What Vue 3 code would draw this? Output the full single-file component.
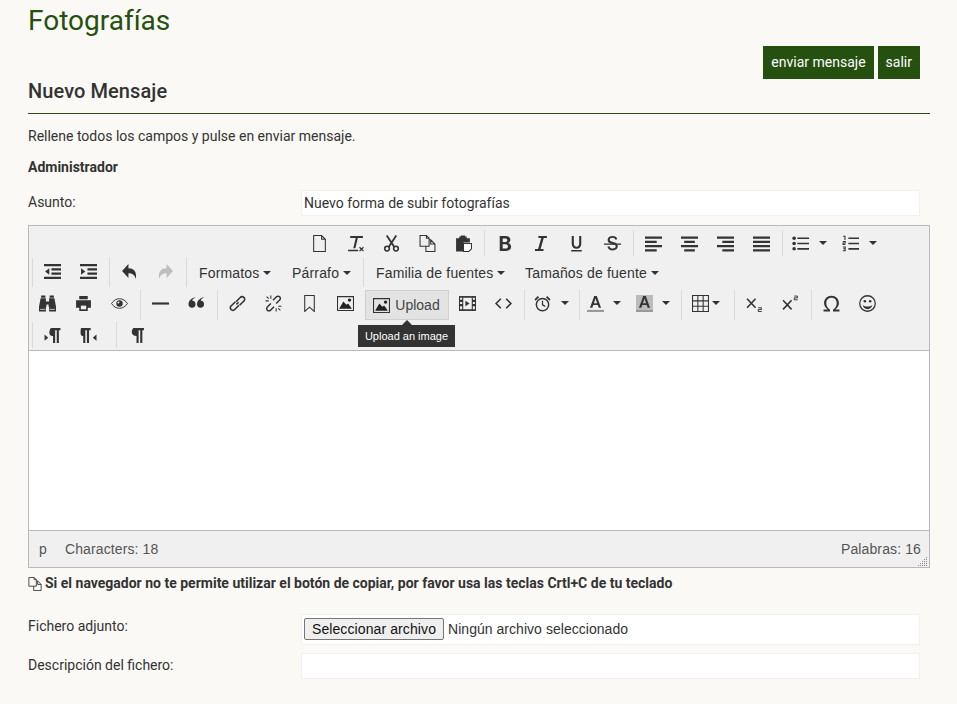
<script setup>
const icons = {
  newdoc: '<path d="M2.500 .5h7.500l3.500 3.500v11.500h-11z M10 .5v3.500h3.500" fill="none" stroke="#333"/>',
  clear: '<path d="M3 1h12v1.800h-4.800l-2.300 9.700h-2l2.300-9.700h-5.200zM1 13.800h9.500v1.400h-9.500z" fill="#333"/><path d="M11.800 11.500l3.700 3.700M15.500 11.500l-3.700 3.700" stroke="#333" stroke-width="1.200"/>',
  cut: '<path d="M3.500 .5l7 10.500M12.500 .5l-7 10.500" fill="none" stroke="#333" stroke-width="1.700"/><circle cx="3.800" cy="12.800" r="2.200" fill="none" stroke="#333" stroke-width="1.500"/><circle cx="12.200" cy="12.800" r="2.200" fill="none" stroke="#333" stroke-width="1.500"/>',
  copy: '<path d="M1 .5h6l2.500 2.500v7.500h-8.500zM7 .5v2.500h2.500M9.500 4.500h1.500l4 4v7h-8.500v-5M11 4.500v4h4" fill="none" stroke="#333"/>',
  paste: '<path d="M1 3h3v-1.500h1.500v-1h4v1h1.500v1.500h3v4h-6v8.500h-7z" fill="#333"/><path d="M8 8h7.500v5l-2.500 2.500h-5z" fill="#fff" stroke="#333"/>',
  bold: '<path d="M3.500 1h5.500c3 0 4.500 1.400 4.500 3.500 0 1.500-.8 2.600-2.100 3.100 1.700.4 2.800 1.700 2.800 3.500 0 2.600-1.900 3.900-5 3.900h-5.700zM6.300 3.200v3.400h2.300c1.300 0 2-.6 2-1.700s-.7-1.700-2-1.700zM6.300 8.700v4.100h2.600c1.500 0 2.300-.7 2.300-2s-.8-2.100-2.400-2.100z" fill="#333" fill-rule="evenodd"/>',
  italic: '<path d="M6 1h8v1.800h-2.900l-3 10.400h2.700v1.800h-8v-1.800h2.900l3-10.400h-2.700z" fill="#333"/>',
  under: '<path d="M3.500 1h2v7c0 1.800.9 3 2.500 3s2.500-1.200 2.500-3v-7h2v7c0 3.200-1.800 5-4.500 5s-4.500-1.800-4.500-5zM3 14h10v1.500h-10z" fill="#333"/>',
  strike: '<path d="M8 1c2.500 0 4 1 4.500 3l-1.800.5c-.3-1.100-1.200-1.800-2.700-1.800-1.600 0-2.600.7-2.600 1.800 0 1.100 1 1.500 3 2 2.900.7 4.600 1.600 4.600 4.100 0 2.500-2 3.900-4.800 3.900-2.700 0-4.500-1.200-5-3.500l1.900-.5c.3 1.500 1.400 2.300 3.100 2.300 1.600 0 2.800-.7 2.800-2.100 0-1.300-1.100-1.700-3.100-2.200-2.500-.6-4.500-1.400-4.500-3.900 0-2.100 1.900-3.600 4.600-3.600z" fill="#333"/><path d="M0 8h16v1.200h-16z" fill="#333"/>',
  aleft: '<path d="M0 1.500h16v2h-16zM0 5.500h11v2h-11zM0 9.500h16v2h-16zM0 13.500h11v2h-11z" fill="#333"/>',
  acenter: '<path d="M0 1.500h16v2h-16zM3 5.500h10v2h-10zM0 9.500h16v2h-16zM3 13.500h10v2h-10z" fill="#333"/>',
  aright: '<path d="M0 1.500h16v2h-16zM5 5.500h11v2h-11zM0 9.500h16v2h-16zM5 13.500h11v2h-11z" fill="#333"/>',
  ajust: '<path d="M0 1.500h16v2h-16zM0 5.500h16v2h-16zM0 9.500h16v2h-16zM0 13.500h16v2h-16z" fill="#333"/>',
  bullist: '<path d="M5 2.300h11v1.500h-11zM5 7.300h11v1.500h-11zM5 12.300h11v1.500h-11z" fill="#333"/><circle cx="2" cy="3" r="1.700" fill="#333"/><circle cx="2" cy="8" r="1.700" fill="#333"/><circle cx="2" cy="13" r="1.700" fill="#333"/>',
  numlist: '<path d="M6 2.300h10v1.500h-10zM6 7.300h10v1.500h-10zM6 12.300h10v1.500h-10z" fill="#333"/><path d="M1 1.200h1.800v3.500M.8 6.200h2.200v1.400h-2v1.400h2.200M.8 11.300h2.200v3.500h-2.200M1.200 13h1.800" fill="none" stroke="#333"/>',
  outdent: '<path d="M0 1h16v2h-16zM7 5h9v2h-9zM7 9h9v2h-9zM0 13h16v2h-16z" fill="#333"/><path d="M5 5v6l-4-3z" fill="#333"/>',
  indent: '<path d="M0 1h16v2h-16zM7 5h9v2h-9zM7 9h9v2h-9zM0 13h16v2h-16z" fill="#333"/><path d="M1 5v6l4-3z" fill="#333"/>',
  undo: '<path d="M7 1v4c5 0 8 3 7 10-1.200-3.800-3.500-5.300-7-5.300v4.300l-6-6.500z" fill="#333"/>',
  redo: '<path d="M9 1v4c-5 0-8 3-7 10 1.200-3.800 3.500-5.300 7-5.300v4.300l6-6.500z" fill="#bdbdbd"/>',
  find: '<path d="M2 .5h4v2h-4zM10 .5h4v2h-4zM1.500 3h5v3h3v-3h5l1.500 8v4.500h-6.500v-4.500h-.5v-2h-2v2h-.5v4.500h-6.500v-4.500z" fill="#333"/><path d="M1 13.500h5M10 13.500h5" stroke="#f0f0f0" stroke-width=".7"/>',
  print: '<path d="M4 1h8v3h-8zM1 5h14v7h-3v3h-8v-3h-3z" fill="#333"/><path d="M5.500 10h5v3.500h-5z" fill="#f0f0f0"/>',
  eye: '<path d="M.5 8c2-3 4.500-4.500 7.500-4.500s5.500 1.500 7.500 4.500c-2 3-4.500 4.500-7.500 4.500s-5.500-1.500-7.500-4.500z" fill="none" stroke="#333" stroke-width=".9"/><circle cx="8" cy="8" r="3" fill="#333"/><circle cx="7" cy="7" r=".9" fill="#f0f0f0"/>',
  hr: '<path d="M0 7h16v2h-16z" fill="#333"/>',
  quote: '<path d="M7.500 2c-2.200.7-3.300 1.900-3.500 3.300a3.300 3.300 0 1 1-3.500 3.300c0-3.400 2.700-6 7-6.600zM15.500 2c-2.200.7-3.300 1.900-3.500 3.300a3.300 3.300 0 1 1-3.500 3.300c0-3.400 2.700-6 7-6.600z" fill="#333"/>',
  link: '<path d="M7 8.800l2-2" stroke="#333" stroke-width="1.400"/><path d="M6 6.300l-4 4a2.300 2.300 0 0 0 0 3.400 2.300 2.300 0 0 0 3.400 0l4-4" fill="none" stroke="#333" stroke-width="1.500"/><path d="M6.600 6.300l4-4a2.300 2.300 0 0 1 3.400 0 2.300 2.300 0 0 1 0 3.400l-4 4" fill="none" stroke="#333" stroke-width="1.500"/>',
  unlink: '<path d="M5.500 8l-3.300 3.300a2.100 2.100 0 0 0 0 3 2.100 2.100 0 0 0 3 0l3.300-3.300M10.500 8l3.300-3.300a2.100 2.100 0 0 0 0-3 2.100 2.100 0 0 0-3 0l-3.300 3.300" fill="none" stroke="#333" stroke-width="1.400"/><path d="M.5 5.500h3M5.500 .5v3M10.500 15.500v-3M15.500 10.500h-3M1.500 1.500l2 2M14.500 14.500l-2-2" stroke="#333"/>',
  bookmark: '<path d="M3.500 .5h9v15l-4.500-4-4.500 4z" fill="none" stroke="#333"/>',
  image: '<path d="M.5 1.500h15v13h-15z" fill="none" stroke="#333"/><path d="M2 13l4-7 2.800 3.200 1.700-1.200 3.500 5z" fill="#222"/><circle cx="11.800" cy="4.800" r="1.600" fill="#222"/>',
  film: '<path d="M0 1h16v14h-16z" fill="#333"/><path d="M1 2.500h2v2h-2zM1 6.500h2v2h-2zM1 10.500h2v3h-2zM13 2.500h2v2h-2zM13 6.500h2v2h-2zM13 10.500h2v3h-2zM4 2.500h8v11h-8z" fill="#f0f0f0"/><path d="M6 5.500v5l4-2.500z" fill="#333"/>',
  code: '<path d="M5.500 3.500l-4.500 4.500 4.500 4.500M10.500 3.500l4.500 4.500-4.500 4.500" fill="none" stroke="#333" stroke-width="1.500"/>',
  alarm: '<circle cx="8" cy="9" r="5.800" fill="none" stroke="#333" stroke-width="1.400"/><path d="M8 5.500v3.700l2.500 1.500" fill="none" stroke="#333" stroke-width="1.200"/><path d="M.5 4l3-3 1.300 1-3.300 3.300zM15.500 4l-3-3-1.300 1 3.300 3.300z" fill="#333"/>',
  fore: '<path d="M6.800 1h2.400l4 11h-2.200l-.9-2.600h-4.200l-.9 2.600h-2.200zM8 3.300l-1.500 4.400h3z" fill="#333" fill-rule="evenodd"/><path d="M0 14h16v2h-16z" fill="#999"/>',
  back: '<path d="M0 0h16v14h-16z" fill="#bbb"/><path d="M6.800 1h2.400l4 11h-2.200l-.9-2.600h-4.200l-.9 2.600h-2.200zM8 3.300l-1.500 4.400h3z" fill="#333" fill-rule="evenodd"/><path d="M0 14h16v2h-16z" fill="#999"/>',
  table: '<path d="M.5 .5h15v15h-15zM.5 5.500h15M.5 10.500h15M5.500 .5v15M10.500 .5v15" fill="none" stroke="#333"/>',
  sub: '<path d="M1 3.500l8 8.500M9 3.500l-8 8.500" fill="none" stroke="#333" stroke-width="1.500"/><path d="M11.500 12h3v1.700h-3v1.800h3.300" fill="none" stroke="#333" stroke-width=".9"/>',
  sup: '<path d="M1 5l8 8.500M9 5l-8 8.500" fill="none" stroke="#333" stroke-width="1.500"/><path d="M11.500 1h3v1.700h-3v1.800h3.300" fill="none" stroke="#333" stroke-width=".9"/>',
  omega: '<path d="M.5 15.500v-1.900h3.900c-2.200-1.600-3.400-3.500-3.400-6 0-3.900 3-6.900 7-6.900s7 3 7 6.900c0 2.500-1.200 4.400-3.400 6h3.900v1.900h-6.100v-1.700c2.100-1.200 3.500-3.500 3.500-6.100 0-3-1.900-5.100-4.900-5.100s-4.900 2.100-4.900 5.100c0 2.600 1.400 4.900 3.500 6.100v1.700z" fill="#333"/>',
  smile: '<circle cx="8" cy="8" r="7.300" fill="none" stroke="#333" stroke-width="1.200"/><circle cx="5.500" cy="5.800" r="1.200" fill="#333"/><circle cx="10.500" cy="5.800" r="1.200" fill="#333"/><path d="M3.500 9.500c1.200 1 2.700 1.400 4.500 1.400s3.300-.4 4.500-1.400c-.4 2.500-2.200 3.800-4.500 3.800s-4.100-1.300-4.500-3.800z" fill="#333"/>',
  ltr: '<path d="M6 1h9.500v2h-1.500v12h-2v-12h-1.500v12h-2v-6.500c-2 0-3.500-1.300-3.500-3.200 0-2.400 1.500-4.300 1.500-4.300z" fill="#333"/><path d="M.5 7v6l3.500-3z" fill="#333"/>',
  rtl: '<path d="M.5 1h9.500v2h-1.500v12h-2v-12h-1.500v12h-2v-6.500c-1.500 0-2.500-1.300-2.500-3.200 0-2.400 .5-4.300 .5-4.300z" fill="#333"/><path d="M15.500 7v6l-3.500-3z" fill="#333"/>',
  pilcrow: '<path d="M5 1h10v2h-1.500v12h-2v-12h-1.500v12h-2v-6.500c-3 0-4.500-1.500-4.500-3.700s1.500-3.800 1.500-3.800z" fill="#333"/>',
  copysmall: '<path d="M1 .5h6l2.500 2.500v7.500h-8.500zM7 .5v2.500h2.500M9.500 4.500h1.500l4 4v7h-8.500v-5M11 4.500v4h4" fill="none" stroke="#333"/>'
}

const rows = [
  { cls: 'r1', groups: [
    { first: true, items: ['newdoc', 'clear', 'cut', 'copy', 'paste'] },
    { items: ['bold', 'italic', 'under', 'strike'] },
    { items: ['aleft', 'acenter', 'aright', 'ajust'] },
    { items: [{ i: 'bullist', w: 'split50' }, { i: 'numlist', w: 'split50' }] }
  ] },
  { cls: 'r2', groups: [
    { items: ['outdent', 'indent'] },
    { items: ['undo', 'redo'] },
    { menu: true, items: [{ t: 'Formatos', w: 'm1' }, { t: 'Párrafo', w: 'm2' }] },
    { menu: true, items: [{ t: 'Familia de fuentes', w: 'm3' }, { t: 'Tamaños de fuente', w: 'm4' }] }
  ] },
  { cls: 'r3', groups: [
    { first: true, items: ['find', 'print', 'eye'] },
    { items: ['hr', 'quote'] },
    { items: ['link', 'unlink', 'bookmark', 'image', { i: 'image', t: 'Upload', w: 'upload' }, 'film', 'code'] },
    { items: [{ i: 'alarm', w: 'split50' }] },
    { items: [{ i: 'fore', w: 'split49' }, { i: 'back', w: 'split48' }] },
    { items: [{ i: 'table', w: 'tbl' }] },
    { items: ['sub', 'sup'] },
    { items: ['omega', 'smile'] }
  ] },
  { cls: 'r4', groups: [
    { items: ['ltr', 'rtl'], wide: true },
    { items: ['pilcrow'] }
  ] }
]

const norm = (it) => (typeof it === 'string' ? { i: it } : it)
</script>

<template>
  <div class="page">
    <h1 class="title">Fotografías</h1>
    <div class="actions">
      <a class="action">enviar mensaje</a>
      <a class="action">salir</a>
    </div>
    <h2 class="heading">Nuevo Mensaje</h2>
    <p class="intro">Rellene todos los campos y pulse en enviar mensaje.</p>
    <p class="to">Administrador</p>

    <div class="field subject">
      <label>Asunto:</label>
      <div class="box">Nuevo forma de subir fotografías</div>
    </div>

    <div class="editor">
      <div class="toolbar">
        <div v-for="row in rows" :key="row.cls" class="row" :class="row.cls">
          <div
            v-for="(g, gi) in row.groups"
            :key="gi"
            class="group"
            :class="{ first: g.first, wide: g.wide, menu: g.menu }"
          >
            <div
              v-for="(raw, k) in g.items"
              :key="k"
              class="btn"
              :class="norm(raw).w"
            >
              <svg v-if="norm(raw).i" class="ico" viewBox="0 0 16 16" v-html="icons[norm(raw).i]"></svg>
              <span v-if="norm(raw).t" class="txt">{{ norm(raw).t }}</span>
              <i v-if="norm(raw).w && norm(raw).w !== 'upload'" class="caret"></i>
              <div v-if="norm(raw).w === 'upload'" class="tip">Upload an image</div>
            </div>
          </div>
        </div>
      </div>
      <div class="area"></div>
      <div class="status">
        <span class="path">p</span>
        <span class="chars">Characters: 18</span>
        <span class="words">Palabras: 16</span>
        <svg class="grip" viewBox="0 0 10 10">
          <path d="M8 1h1v1h-1zM6 3h1v1h-1zM8 3h1v1h-1zM4 5h1v1h-1zM6 5h1v1h-1zM8 5h1v1h-1zM2 7h1v1h-1zM4 7h1v1h-1zM6 7h1v1h-1zM8 7h1v1h-1zM0 9h1v1h-1zM2 9h1v1h-1zM4 9h1v1h-1zM6 9h1v1h-1zM8 9h1v1h-1z" fill="#888"/>
        </svg>
      </div>
    </div>

    <p class="note">
      <svg class="note-ico" viewBox="0 0 16 16" v-html="icons.copysmall"></svg>
      <span>Si el navegador no te permite utilizar el botón de copiar, por favor usa las teclas Crtl+C de tu teclado</span>
    </p>

    <div class="field attach">
      <label>Fichero adjunto:</label>
      <div class="box filebox">
        <button class="filebtn" type="button">Seleccionar archivo</button>
        <span class="fname">Ningún archivo seleccionado</span>
      </div>
    </div>
    <div class="field desc">
      <label>Descripción del fichero:</label>
      <div class="box"></div>
    </div>
  </div>
</template>

<style>
html, body { background: #faf9f5; }
</style>

<style scoped>
.page {
  box-sizing: border-box;
  width: 957px;
  height: 704px;
  overflow: hidden;
  padding: 0 27px 0 28px;
  background: #faf9f5;
  color: #333;
  font-family: Roboto, sans-serif;
  font-size: 14px;
}
.title {
  margin: 0;
  padding-top: 4px;
  height: 46px;
  box-sizing: border-box;
  font-size: 28px;
  line-height: 34px;
  font-weight: 400;
  color: #25500f;
}
.actions {
  display: flex;
  justify-content: flex-end;
  gap: 4px;
  padding-right: 10px;
}
.action {
  height: 33px;
  line-height: 33px;
  padding: 0 8px;
  background: #25500f;
  color: #fff;
  font-size: 14px;
  font-weight: 400;
}
.heading {
  margin: 0;
  height: 34px;
  line-height: 24px;
  font-size: 20px;
  font-weight: 500;
  letter-spacing: .08px;
  border-bottom: 1px solid #2d4a1c;
  color: #333;
}
.intro { margin: 14px 0 0; height: 17px; line-height: 17px; }
.to { margin: 14px 0 0; height: 17px; line-height: 17px; font-weight: 700; }

.field { display: flex; padding-right: 10px; }
.field label { width: 273px; flex: none; line-height: 24px; }
.box {
  flex: 1;
  box-sizing: border-box;
  background: #fff;
  border: 1px solid #f1f0ec;
  padding: 0 2px;
  line-height: 24px;
}
.subject { margin-top: 14px; height: 26px; }
.subject .box { height: 26px; }

.editor {
  box-sizing: border-box;
  margin-top: 9px;
  width: 902px;
  height: 343px;
  border: 1px solid #b9b9b9;
  display: flex;
  flex-direction: column;
  font-family: "Liberation Sans", Arial, sans-serif;
  background: #f0f0f0;
}
.toolbar {
  box-sizing: border-box;
  height: 124px;
  padding-top: 4px;
  flex: none;
}
.row { display: flex; }
.r1 { height: 26px; padding-left: 273px; }
.r2 { height: 29px; margin-top: 2px; }
.r3 { height: 30px; margin-top: 3px; padding-left: 1px; }
.r4 { height: 26px; margin-top: 2px; }
.group {
  display: flex;
  margin-left: 2px;
  padding-left: 2px;
  border-left: 1px solid #d9d9d9;
}
.r2 .group:first-child, .r4 .group:first-child { margin-left: 3px; }
.group.first { border-left: 0; margin-left: 0; padding-left: 0; }
.group.wide { margin-right: 7px; }
.btn {
  position: relative;
  flex: none;
  box-sizing: border-box;
  width: 36px;
  display: flex;
  align-items: center;
  justify-content: center;
  color: #333;
  font-size: 14px;
}
.ico { width: 17px; height: 17px; display: block; flex: none; margin-left: -1px; }
.r2 .group:not(.menu) .btn { padding-bottom: 3px; }
.r3 .btn { padding-bottom: 4px; }
.r4 .btn { padding-bottom: 0; }

.txt { white-space: nowrap; }
.caret {
  width: 0;
  height: 0;
  border: 4px solid transparent;
  border-top-color: #333;
  border-bottom: 0;
  margin-left: 4px;
}
.menu .txt { letter-spacing: .17px; }
.menu .btn { justify-content: flex-start; padding-left: 10px; padding-top: 1px; }
.m1 { width: 93px; }
.m2 { width: 79px; }
.m3 { width: 149px; }
.m4 { width: 140px; }
.split50 { width: 50px; justify-content: flex-start; padding-left: 8px; }
.split50 .caret { margin-left: 10px; }
.split49 { width: 49px; justify-content: flex-start; padding-left: 6px; }
.split49 .caret { margin-left: 9px; }
.split48 { width: 48px; justify-content: flex-start; padding-left: 6px; }
.split48 .caret { margin-left: 9px; }
.tbl { width: 48px; justify-content: flex-start; padding-left: 9px; }
.tbl .caret { margin-left: 3px; }
.r3 .upload {
  width: 84px;
  margin: 0 1px;
  padding: 0;
  gap: 5px;
  background: #e3e3e3;
  border: 1px solid #cfcfcf;
}
.upload .txt { color: #444; }
.tip {
  position: absolute;
  left: -8px;
  top: 34px;
  width: 97px;
  height: 22px;
  line-height: 22px;
  background: #333;
  color: #fff;
  font-size: 11px;
  text-align: center;
  white-space: nowrap;
}
.tip::before {
  content: "";
  position: absolute;
  left: 44px;
  top: -5px;
  border: 5px solid transparent;
  border-top: 0;
  border-bottom-color: #333;
}

.area {
  flex: 1;
  background: #fff;
  border-top: 1px solid #b9b9b9;
  border-bottom: 1px solid #b9b9b9;
}
.status {
  position: relative;
  height: 36px;
  flex: none;
  display: flex;
  align-items: center;
  padding: 0 8px 0 10px;
  color: #555;
  font-size: 14px;
  letter-spacing: .12px;
}
.chars { margin-left: 18px; }
.words { margin-left: auto; }
.grip { position: absolute; right: 1px; bottom: 1px; width: 10px; height: 10px; }

.note {
  margin: 7px 0 0;
  height: 17px;
  line-height: 17px;
  font-weight: 700;
  display: flex;
  align-items: center;
  white-space: nowrap;
}
.note-ico { width: 14px; height: 14px; margin-right: 3px; flex: none; }

.attach { margin-top: 22px; height: 31px; }
.attach label { line-height: 24px; }
.attach .box { height: 31px; display: flex; align-items: center; padding-bottom: 2px; }
.filebtn {
  box-sizing: border-box;
  width: 140px;
  height: 22px;
  padding: 0;
  margin-right: 4px;
  background: #efefef;
  border: 1px solid #767676;
  border-radius: 2px;
  color: #111;
  font-family: "Liberation Sans", Arial, sans-serif;
  font-size: 14px;
  letter-spacing: .1px;
}
.fname { font-family: "Liberation Sans", Arial, sans-serif; color: #333; letter-spacing: .04px; }
.desc { margin-top: 8px; height: 26px; }
.desc .box { height: 26px; }
</style>
